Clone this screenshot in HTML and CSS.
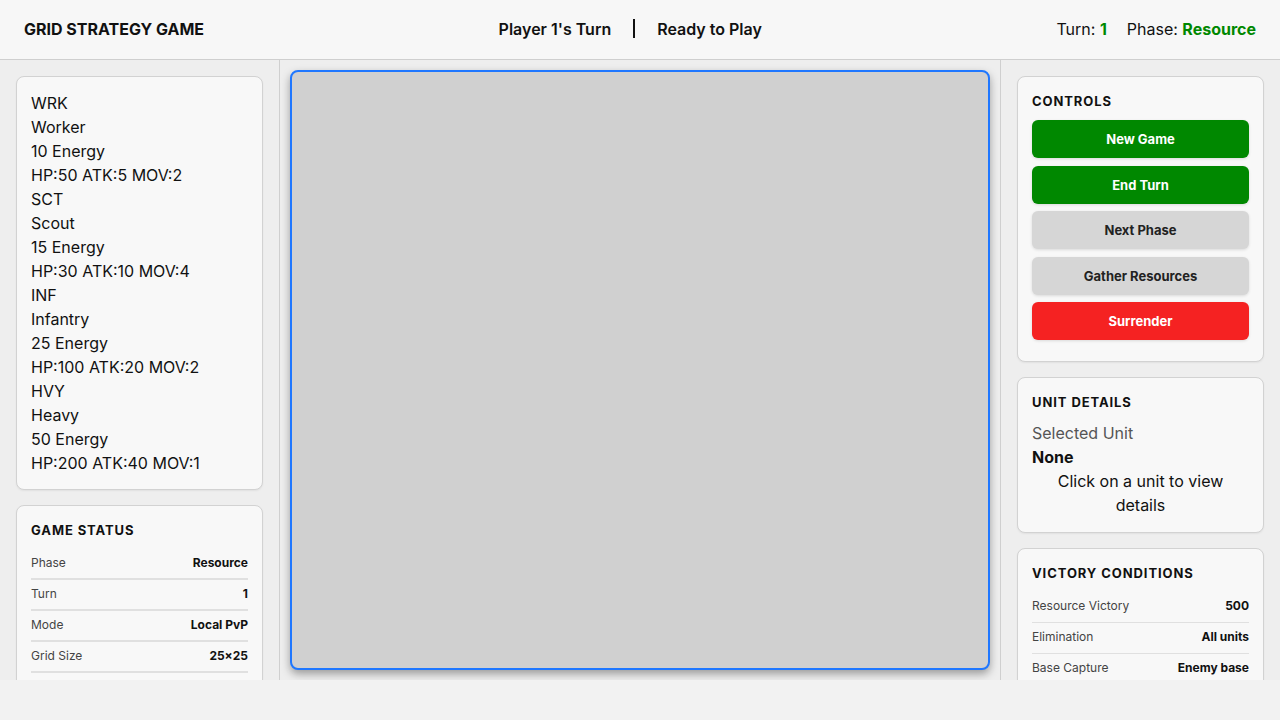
FILE: index.html
```html
<!DOCTYPE html>
<html lang="en">
<head>
<meta charset="utf-8">
<title>Grid Strategy Game</title>
<link rel="stylesheet" href="styles.css">
</head>
<body>
<div class="app">
  <header class="topbar">
    <div class="title">GRID STRATEGY GAME</div>
    <div class="turn-info">
      <span class="player">Player 1's Turn</span>
      <span class="divider"></span>
      <span class="status">Ready to Play</span>
    </div>
    <div class="meta">
      <span>Turn: <b class="green">1</b></span>
      <span>Phase: <b class="green">Resource</b></span>
    </div>
  </header>
  <main class="main">
    <aside class="sidebar left">
      <section class="card units">
        <div>WRK</div><div>Worker</div><div>10 Energy</div><div>HP:50 ATK:5 MOV:2</div>
        <div>SCT</div><div>Scout</div><div>15 Energy</div><div>HP:30 ATK:10 MOV:4</div>
        <div>INF</div><div>Infantry</div><div>25 Energy</div><div>HP:100 ATK:20 MOV:2</div>
        <div>HVY</div><div>Heavy</div><div>50 Energy</div><div>HP:200 ATK:40 MOV:1</div>
      </section>
      <section class="card">
        <h3 class="card-title">Game Status</h3>
        <div class="row"><span class="label">Phase</span><span class="value">Resource</span></div>
        <div class="row"><span class="label">Turn</span><span class="value">1</span></div>
        <div class="row"><span class="label">Mode</span><span class="value">Local PvP</span></div>
        <div class="row"><span class="label">Grid Size</span><span class="value">25×25</span></div>
      </section>
    </aside>
    <section class="center">
      <div class="board"></div>
    </section>
    <aside class="sidebar right">
      <section class="card">
        <h3 class="card-title">Controls</h3>
        <div class="buttons">
          <button class="btn green-btn">New Game</button>
          <button class="btn green-btn">End Turn</button>
          <button class="btn gray-btn">Next Phase</button>
          <button class="btn gray-btn">Gather Resources</button>
          <button class="btn red-btn">Surrender</button>
        </div>
      </section>
      <section class="card">
        <h3 class="card-title">Unit Details</h3>
        <div class="sel-label">Selected Unit</div>
        <div class="sel-value">None</div>
        <div class="hint">Click on a unit to view details</div>
      </section>
      <section class="card">
        <h3 class="card-title">Victory Conditions</h3>
        <div class="row thin"><span class="label">Resource Victory</span><span class="value">500</span></div>
        <div class="row thin"><span class="label">Elimination</span><span class="value">All units</span></div>
        <div class="row thin"><span class="label">Base Capture</span><span class="value">Enemy base</span></div>
      </section>
    </aside>
  </main>
</div>
</body>
</html>
```
FILE: styles.css
```css
* { box-sizing: border-box; }
html, body { margin: 0; padding: 0; }
body {
  background: #f2f2f2;
  font-family: Inter, "Noto Sans", "Liberation Sans", sans-serif;
  color: #111;
  width: 1280px;
  height: 720px;
  overflow: hidden;
}
.app { display: flex; flex-direction: column; height: 680px; }
.topbar {
  height: 60px;
  flex: none;
  background: #f7f7f7;
  border-bottom: 1px solid #cfcfcf;
  display: flex;
  align-items: center;
  justify-content: space-between;
  padding: 0 24px 1px;
  font-size: 16px;
}
.title { font-weight: 700; letter-spacing: 0; }
.turn-info { display: flex; align-items: center; font-weight: 600; }
.divider { width: 2px; height: 19px; background: #111; margin: 0 22px 2px; }
.meta { display: flex; gap: 20px; }
.green { color: #008800; font-weight: 700; }
.main { flex: 1; display: flex; min-height: 0; overflow: hidden; background: #eeeeee; }
.sidebar {
  width: 280px;
  flex: none;
  padding: 16px;
  display: flex;
  flex-direction: column;
  gap: 15px;
  background: #eeeeee;
  overflow: hidden;
}
.sidebar.left { border-right: 1px solid #cfcfcf; }
.sidebar.right { border-left: 1px solid #cfcfcf; padding-top: 16px; }
.card {
  background: #f8f8f8;
  border: 1px solid #d2d2d2;
  border-radius: 8px;
  padding: 15px 14px;
  box-shadow: 0 1px 2px rgba(0,0,0,0.06);
  flex: none;
}
.units { font-size: 16px; line-height: 24px; padding-top: 14px; padding-bottom: 14px; }
.card-title {
  margin: 0 0 10px;
  font-size: 13px;
  line-height: 18px;
  font-weight: 700;
  text-transform: uppercase;
  letter-spacing: 0.07em;
  color: #111;
}
.row {
  display: flex;
  justify-content: space-between;
  font-size: 12px;
  line-height: 15px;
  padding: 6px 0 8px;
  border-bottom: 2px solid #e0e0e0;
}
.row.thin { border-bottom-width: 1px; padding-bottom: 9px; }
.label { color: #444; }
.value { font-weight: 700; color: #111; }
.center { flex: 1; padding: 10px; display: flex; }
.board {
  flex: 1;
  background: #d0d0d0;
  border: 2px solid #1f77ff;
  border-radius: 8px;
  box-shadow: 0 4px 8px rgba(0,0,0,0.35);
}
.buttons { display: flex; flex-direction: column; gap: 7.5px; padding-bottom: 6px; }
.btn {
  height: 38px;
  border: none;
  border-radius: 6px;
  font-family: inherit;
  font-size: 13px;
  font-weight: 700;
  box-shadow: 0 1px 3px rgba(0,0,0,0.12);
}
.green-btn { background: #008800; color: #fff; }
.gray-btn { background: #d6d6d6; color: #222; }
.red-btn { background: #f52222; color: #fff; }
.sel-label { font-size: 16px; line-height: 24px; color: #555; margin-top: 9px; }
.sel-value { font-size: 16px; line-height: 24px; font-weight: 700; }
.hint { font-size: 16px; line-height: 24px; text-align: center; padding: 0 20px; }
```
